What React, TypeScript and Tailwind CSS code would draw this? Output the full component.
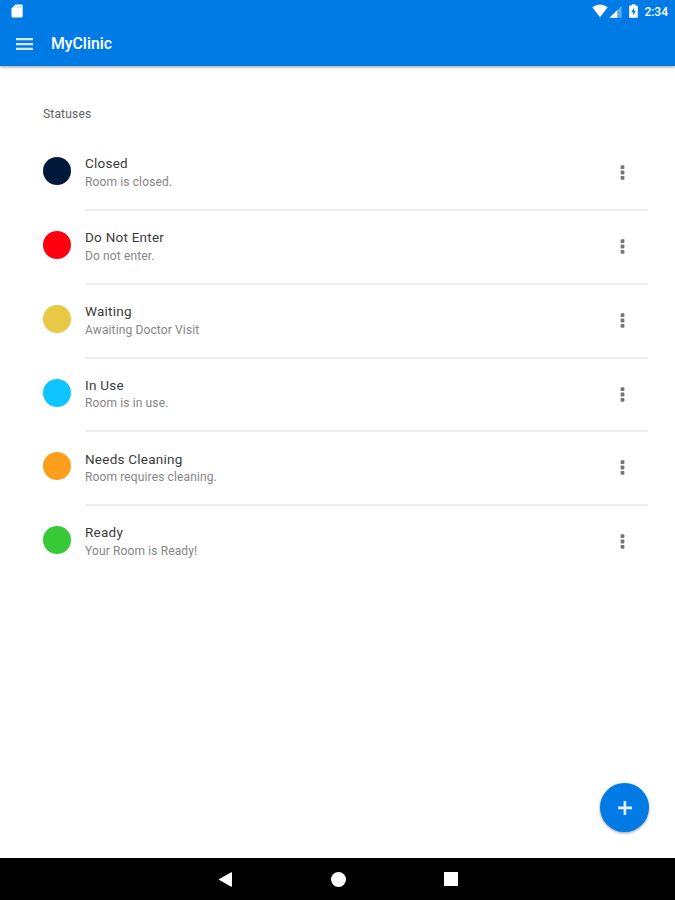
const statuses = [
  { name: 'Closed', description: 'Room is closed.', color: 'bg-[#00193b]' },
  { name: 'Do Not Enter', description: 'Do not enter.', color: 'bg-[#ff0010]' },
  { name: 'Waiting', description: 'Awaiting Doctor Visit', color: 'bg-[#e8c945]' },
  { name: 'In Use', description: 'Room is in use.', color: 'bg-[#10c4ff]' },
  { name: 'Needs Cleaning', description: 'Room requires cleaning.', color: 'bg-[#fd9f1c]' },
  { name: 'Ready', description: 'Your Room is Ready!', color: 'bg-[#38c938]' },
];

function SystemBar() {
  return (
    <div className="flex h-[22px] items-center justify-between pl-[11px] pr-[7px]">
      <svg className="h-[14px] w-[12px]" viewBox="0 0 12 14" fill="white">
        <path d="M4.5 0.5H10.3Q11.7 0.5 11.7 1.9V12Q11.7 13.5 10.2 13.5H2Q0.5 13.5 0.5 12V4.5Z" />
        <path d="M5 2V4M7.1 2V4M9.2 2V4" stroke="#8fc4f5" strokeWidth="0.8" />
      </svg>

      <div className="flex items-center">
        {/* Wifi */}
        <svg className="h-[14px] w-[16px]" viewBox="0 0 16 14" fill="white">
          <path d="M0.3 3.3Q8 -2.2 15.7 3.3L8 13.2Z" />
        </svg>
        {/* Cell signal */}
        <svg className="ml-[1px] h-[13px] w-[13px]" viewBox="0 0 13 13" fill="white">
          <path d="M0.5 12.8L12.7 0.8V12.8Z" opacity="0.35" />
          <path d="M0.5 12.8L8.2 5.2V12.8Z" />
        </svg>
        {/* Charging battery */}
        <svg className="ml-[7px] h-[14px] w-[9px]" viewBox="0 0 9 14" fill="white">
          <path d="M2.8 0.2H6.2V1.5H8.2Q8.8 1.5 8.8 2.1V13.2Q8.8 13.8 8.2 13.8H0.8Q0.2 13.8 0.2 13.2V2.1Q0.2 1.5 0.8 1.5H2.8Z" />
          <path d="M5.1 3.8L2.3 8H4.1V11.5L6.8 7H5.1Z" fill="#007be6" />
        </svg>
        <span className="ml-[6px] pt-px text-[12px] font-medium leading-none text-white">2:34</span>
      </div>
    </div>
  );
}

function AppBar() {
  return (
    <header className="h-[66px] shrink-0 bg-[#007be6] shadow-[0_1px_3px_rgba(0,0,0,0.4)]">
      <SystemBar />
      <div className="flex h-[44px] items-center pl-4">
        <button aria-label="Open menu">
          <svg className="block h-[12px] w-[17px]" viewBox="0 0 17 12" fill="#d6e8fb">
            <path d="M0 0H17V2.3H0ZM0 4.9H17V7.2H0ZM0 9.7H17V12H0Z" />
          </svg>
        </button>
        <h1 className="ml-[18px] text-[15.8px] font-medium leading-none text-white">MyClinic</h1>
      </div>
    </header>
  );
}

function StatusRow({ status }: { status: (typeof statuses)[number] }) {
  return (
    <li className="group flex h-[73.8px]">
      <div className={`mt-[20px] h-[28px] w-[28px] shrink-0 rounded-full ${status.color}`} />
      <div className="ml-[14px] flex flex-1 justify-between border-b-2 border-[#eeeeee] group-last:border-transparent">
        <div className="pt-[17.2px]">
          <div className="text-[13.5px] leading-[18px] tracking-[0.24px] text-[#3c3c3c]">{status.name}</div>
          <div className="pt-[0.6px] text-[12px] leading-[19px] tracking-[0.13px] text-[#858585]">{status.description}</div>
        </div>
        <button aria-label="More options" className="mr-[23px] mt-[28px] h-[15px] w-[5px]">
          <svg className="block h-[15px] w-[5px]" viewBox="0 0 5 15" fill="#757575">
            <rect x="0.6" y="0.2" width="3.8" height="3.8" rx="0.8" />
            <rect x="0.6" y="5.6" width="3.8" height="3.8" rx="0.8" />
            <rect x="0.6" y="11" width="3.8" height="3.8" rx="0.8" />
          </svg>
        </button>
      </div>
    </li>
  );
}

function NavigationBar() {
  return (
    <nav className="flex h-[42px] shrink-0 items-center justify-center gap-[98px] bg-black">
      <svg className="h-[15px] w-[15px]" viewBox="0 0 15 15" fill="white">
        <path d="M0.5 7.5L13.2 0.3Q14 0 14 1V14Q14 15 13.2 14.7Z" />
      </svg>
      <div className="h-[15px] w-[15px] rounded-full bg-white" />
      <div className="h-[14px] w-[14px] bg-white" />
    </nav>
  );
}

export default function App() {
  return (
    <div className="flex h-screen w-full flex-col bg-white font-['Roboto',sans-serif]">
      <AppBar />

      <main className="relative flex-1 pl-[43px] pr-[27px] pt-[40px]">
        <h2 className="text-[12px] font-normal leading-[16px] tracking-[0.18px] text-[#606060]">Statuses</h2>
        <ul className="mt-[15.2px]">
          {statuses.map((status) => (
            <StatusRow key={status.name} status={status} />
          ))}
        </ul>

        <button
          aria-label="Add status"
          className="absolute bottom-[26px] right-[26px] flex h-[49px] w-[49px] items-center justify-center rounded-full bg-[#007be6] shadow-[0_1px_3px_rgba(0,0,0,0.4)]"
        >
          <svg className="h-[14px] w-[14px]" viewBox="0 0 14 14" fill="#e4f0fd">
            <path d="M5.6 0H8.2V5.6H14V8.2H8.2V14H5.6V8.2H0V5.6H5.6Z" />
          </svg>
        </button>
      </main>

      <NavigationBar />
    </div>
  );
}
